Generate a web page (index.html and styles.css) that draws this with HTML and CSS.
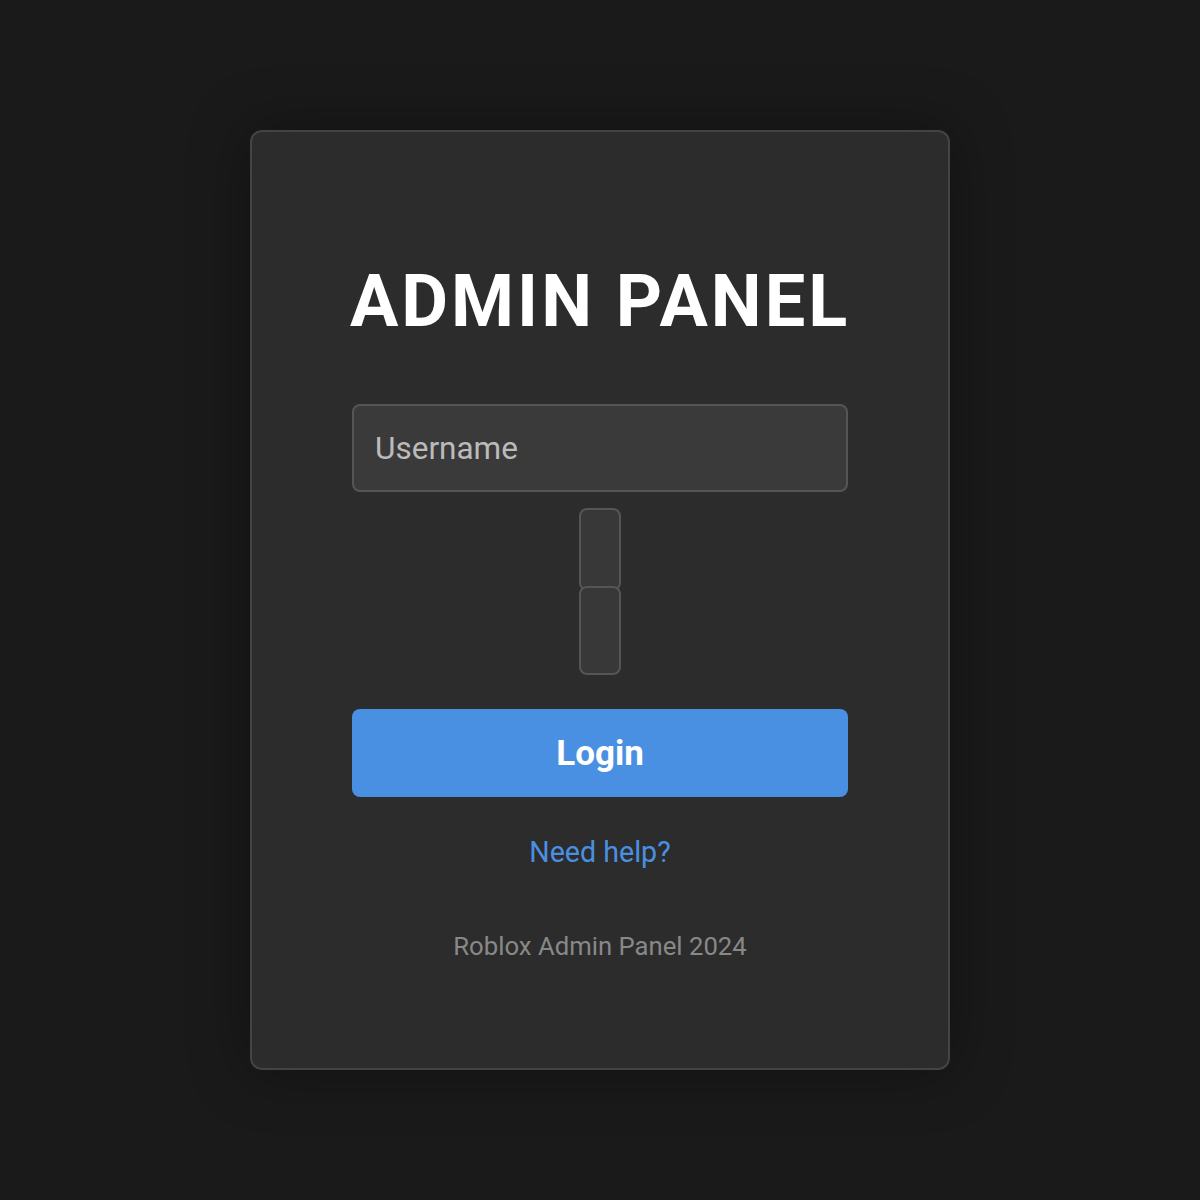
FILE: index.html
```html
<!DOCTYPE html>
<html lang="en">
<head>
    <meta charset="UTF-8">
    <meta name="viewport" content="width=device-width, initial-scale=1.0">
    <title>Admin Panel</title>
    <link rel="stylesheet" href="styles.css">
</head>
<body>

    <div class="login-card">
        <h1 class="login-title">ADMIN PANEL</h1>

        <!-- login form -->
        <form class="login-form">
            <input type="text" class="text-input" placeholder="Username">
            <div class="pin-stack">
                <input type="password" class="pin-input">
                <input type="password" class="pin-input">
            </div>
            <button type="button" class="login-button">Login</button>
        </form>

        <a href="#" class="help-link">Need help?</a>
        <p class="footer-text">Roblox Admin Panel 2024</p>
    </div>

</body>
</html>
```

FILE: styles.css
```css
body {
    font-family: 'Roboto', 'Liberation Sans', sans-serif;
    background-color: #1a1a1a;
    color: #fff;
    margin: 0;
    padding: 0;
    display: flex;
    justify-content: center;
    align-items: center;
    height: 100vh;
}
.login-card {
    box-sizing: border-box;
    width: 700px;
    height: 940px;
    background-color: #2c2c2c;
    border: 2px solid #444;
    border-radius: 12px;
    box-shadow: 0 0 60px rgba(0, 0, 0, 0.35);
    padding: 128px 100px 0;
    display: flex;
    flex-direction: column;
    align-items: center;
    text-align: center;
}
.login-title {
    font-size: 72px;
    font-weight: 700;
    letter-spacing: 3px;
    line-height: 84px;
    white-space: nowrap;
    margin: 0 0 60px;
}
.login-form {
    width: 100%;
    display: flex;
    flex-direction: column;
    align-items: center;
}
.text-input {
    box-sizing: border-box;
    width: 100%;
    height: 88px;
    padding: 0 21px;
    font-family: inherit;
    font-size: 31.5px;
    color: #ddd;
    background-color: #3a3a3a;
    border: 2px solid #555;
    border-radius: 8px;
}
.text-input::placeholder {
    color: #bbb;
}
.pin-stack {
    display: flex;
    flex-direction: column;
    margin-top: 16px;
}
.pin-input {
    box-sizing: border-box;
    width: 42px;
    height: 83px;
    margin: 0;
    padding: 0;
    background-color: #383838;
    border: 2px solid #555;
    border-radius: 8px;
}
.pin-input + .pin-input {
    height: 89px;
    margin-top: -5px;
}
.login-button {
    width: 100%;
    height: 88px;
    margin-top: 34px;
    font-family: inherit;
    font-size: 35px;
    font-weight: 700;
    color: #fff;
    background-color: #4a90e2;
    border: none;
    border-radius: 8px;
    cursor: pointer;
}
.help-link {
    margin-top: 38px;
    font-size: 28.6px;
    color: #4a90e2;
    text-decoration: none;
}
.footer-text {
    margin: 62px 0 0;
    font-size: 25.7px;
    color: #888;
}
```
